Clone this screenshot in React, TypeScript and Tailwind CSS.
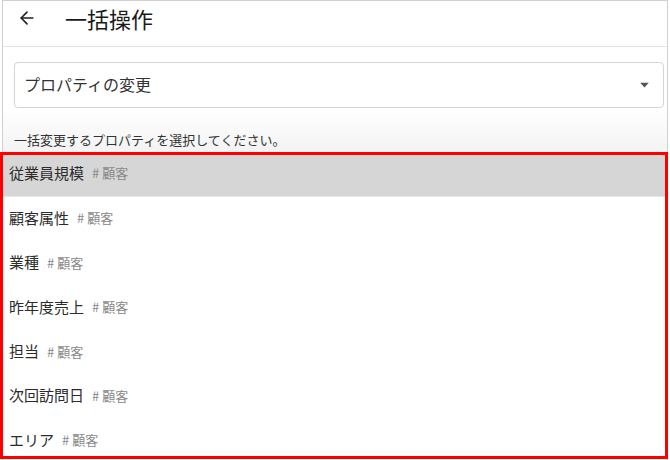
import { ArrowLeft } from 'lucide-react';

const items = ['従業員規模', '顧客属性', '業種', '昨年度売上', '担当', '次回訪問日', 'エリア'];

const font = { fontFamily: '"Noto Sans CJK JP", "Noto Sans", sans-serif' };

export default function App() {
    return (
        <div className="relative w-[670px] h-[460px] overflow-hidden bg-white" style={font}>
            <div className="ml-[2px] w-[666px] h-full border-l border-r border-t border-[#d0d0d0] flex flex-col">
                {/* Header */}
                <header className="h-[46px] shrink-0 flex items-center border-b border-[#e4e4e4] pb-[12px]">
                    <ArrowLeft className="ml-[14px] w-[20px] h-[20px] text-[#222]" strokeWidth={2} />
                    <h1 className="ml-[28px] text-[22px] leading-none text-[#1a1a1a]">一括操作</h1>
                </header>

                {/* Select */}
                <div className="pl-[11px] pr-[3px] pt-[15px] bg-white">
                    <div className="h-[46px] rounded-[4px] border border-[#d4d4d4] flex items-center justify-between pl-[9px] pr-[13px] pb-[3px]">
                        <span className="text-[16px] text-[#333]">プロパティの変更</span>
                        <svg width="11" height="6" viewBox="0 0 12 7" className="mt-[3px]">
                            <path d="M1 1h10L6 6.5z" fill="#555" />
                        </svg>
                    </div>
                </div>

                <div className="px-[11px] pt-[23px] pb-[5px] bg-gradient-to-b from-white to-[#f3f3f3]">
                    <p className="text-[13px] leading-[17px] text-[#333]">一括変更するプロパティを選択してください。</p>
                </div>

                {/* List */}
                <ul className="bg-white">
                    {items.map((name, i) => (
                        <li
                            key={name}
                            className={`h-[44.4px] flex items-center gap-[8px] pl-[6px] pb-[3px] ${i === 0 ? 'bg-[#d6d6d6] border-b border-[#e6e6e6]' : ''}`}
                        >
                            <span className="text-[15px] text-[#2b2b2b]">{name}</span>
                            <span className="text-[13px] text-[#888]"># 顧客</span>
                        </li>
                    ))}
                </ul>
            </div>

            {/* Annotation frame */}
            <div className="absolute left-0 top-[152px] w-[668px] h-[307px] border-[3px] border-[#ff0000] pointer-events-none" />
        </div>
    );
}
